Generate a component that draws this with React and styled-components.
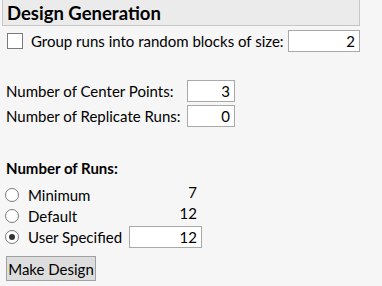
import styled, { createGlobalStyle } from "styled-components";

const GlobalStyle = createGlobalStyle`
  html, body {
    margin: 0;
    padding: 0;
    background: #f6f6f6;
  }
  body {
    font-family: Lato, "Noto Sans", sans-serif;
    font-size: 15px;
    color: #000;
  }
`;

const Panel = styled.div`
  width: 382px;
  height: 286px;
  overflow: hidden;
  display: flex;
  flex-direction: column;
`;

const Header = styled.div`
  margin-left: 2px;
  width: 352px;
  height: 25px;
  background: #ebebeb;
  border: 1px solid #c6c6c6;
  border-top: none;
  display: flex;
  align-items: center;
  padding-left: 4px;
  box-sizing: content-box;
  font-weight: bold;
  font-size: 18.5px;
`;

const Row = styled.div`
  display: flex;
  align-items: center;
  height: 22px;
  margin-top: ${(p) => p.$top || 0}px;
  padding-left: ${(p) => p.$left || 6}px;
`;

const Box = styled.span`
  width: 14px;
  height: 14px;
  border: 1px solid #7a7a7a;
  background: #fff;
  margin-right: 8px;
  flex: none;
`;

const Label = styled.span`
  width: ${(p) => (p.$w ? `${p.$w}px` : "auto")};
  flex: none;
  white-space: nowrap;
`;

const Field = styled.div`
  width: ${(p) => p.$w}px;
  height: 20px;
  border: 1px solid #a9a9a9;
  background: #fff;
  box-sizing: content-box;
  display: flex;
  align-items: center;
  justify-content: flex-end;
  padding-right: 4px;
`;

const Heading = styled.div`
  font-weight: bold;
  padding-left: 6px;
  margin-top: 31px;
  height: 20px;
  line-height: 20px;
`;

const RadioList = styled.div`
  display: flex;
  flex-direction: column;
  margin-top: 6px;
`;

const RadioRow = styled.div`
  display: grid;
  grid-template-columns: 124px 72px;
  align-items: center;
  height: ${(p) => p.$h}px;
  padding-left: 5px;
`;

const Choice = styled.div`
  display: flex;
  align-items: center;
`;

const Radio = styled.span`
  width: 12px;
  height: 12px;
  border-radius: 50%;
  border: 1px solid #7a7a7a;
  background: #fff;
  margin-right: 9px;
  display: flex;
  align-items: center;
  justify-content: center;
  &::after {
    content: "";
    width: 6px;
    height: 6px;
    border-radius: 50%;
    background: ${(p) => (p.$on ? "#333" : "transparent")};
  }
`;

const Value = styled.span`
  text-align: right;
  padding-right: 4px;
  margin-top: -6px;
`;

const Button = styled.button`
  margin: 8px 0 0 6px;
  width: 90px;
  height: 25px;
  padding: 0;
  border: 1px solid #a0a0a0;
  background: #dddddd;
  font-family: inherit;
  font-size: 15px;
  color: #000;
  align-self: flex-start;
`;

export default function App() {
  return (
    <Panel>
      <GlobalStyle />
      <Header>Design Generation</Header>
      <Row $top={4} $left={7}>
        <Box />
        <Label $w={257}>Group runs into random blocks of size:</Label>
        <Field $w={66}>2</Field>
      </Row>
      <Row $top={28}>
        <Label $w={181}>Number of Center Points:</Label>
        <Field $w={42}>3</Field>
      </Row>
      <Row $top={3}>
        <Label $w={181}>Number of Replicate Runs:</Label>
        <Field $w={42}>0</Field>
      </Row>
      <Heading>Number of Runs:</Heading>
      <RadioList>
        <RadioRow $h={22}>
          <Choice>
            <Radio />
            Minimum
          </Choice>
          <Value>7</Value>
        </RadioRow>
        <RadioRow $h={20}>
          <Choice>
            <Radio />
            Default
          </Choice>
          <Value>12</Value>
        </RadioRow>
        <RadioRow $h={22}>
          <Choice>
            <Radio $on />
            User Specified
          </Choice>
          <Field $w={67}>12</Field>
        </RadioRow>
      </RadioList>
      <Button>Make Design</Button>
    </Panel>
  );
}
